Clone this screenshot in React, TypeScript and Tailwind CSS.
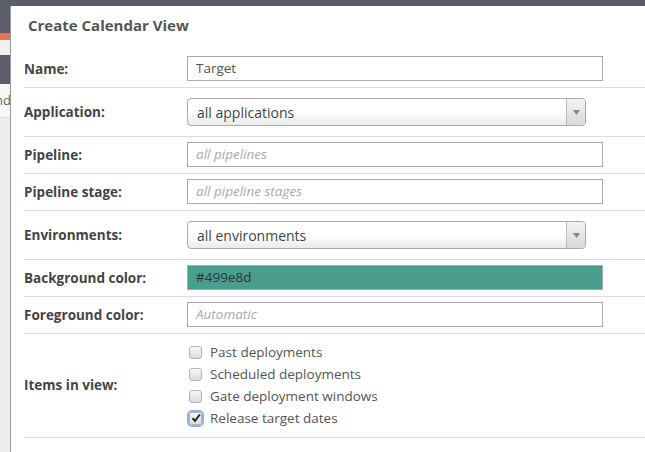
import React from "react";

const inputBase =
  "h-[25px] w-[416px] border border-[#aaa] px-[8px] flex items-center text-[13.5px] font-['Open_Sans',sans-serif]";

function Row({ label, children, py = "pt-[5px] pb-[6px]" }: { label: string; children: React.ReactNode; py?: string }) {
  return (
    <div className={`flex items-center border-b border-[#ddd] ml-[13px] ${py}`}>
      <div className="w-[163px] shrink-0 text-[13.5px] leading-[20px] font-bold text-[#444] font-['Open_Sans',sans-serif]">{label}</div>
      {children}
    </div>
  );
}

function Select({ value }: { value: string }) {
  return (
    <div className="flex h-[28px] w-[399px] rounded-[4px] border border-[#aaa] bg-gradient-to-b from-white from-50% to-[#eaeaea] text-[14px] text-[#444] font-['Open_Sans',sans-serif]">
      <div className="flex-1 flex items-center pl-[9px]">{value}</div>
      <div className="w-[19px] border-l border-[#bbb] flex items-center justify-center rounded-r-[3px] bg-gradient-to-b from-[#f4f4f4] to-[#d8d8d8]">
        <svg width="7" height="5" viewBox="0 0 7 5">
          <path d="M0 0 L7 0 L3.5 5 Z" fill="#888" />
        </svg>
      </div>
    </div>
  );
}

function Check({ label, checked = false }: { label: string; checked?: boolean }) {
  return (
    <div className="flex items-center h-[22px]">
      <div
        className={`ml-[2px] w-[13px] h-[13px] rounded-[3px] border border-[#b4b4b4] bg-gradient-to-b from-[#f6f6f6] to-[#dcdcdc] flex items-center justify-center ${
          checked ? "outline outline-2 outline-[#8fb3e6]" : ""
        }`}
      >
        {checked && (
          <svg width="10" height="10" viewBox="0 0 10 10">
            <path d="M1.5 5.2 L4 8 L8.8 1.5" stroke="#222" strokeWidth="2" fill="none" />
          </svg>
        )}
      </div>
      <span className="ml-[8px] text-[13.5px] text-[#555] font-['Open_Sans',sans-serif]">{label}</span>
    </div>
  );
}

export default function App() {
  return (
    <div className="relative w-[645px] h-[452px] overflow-hidden bg-[#eeeeee]">
      {/* background page */}
      <div className="flex flex-col">
        <div className="h-[33px] bg-[#5b5d6a]" />
        <div className="h-[7px] bg-[#e5774e]" />
        <div className="h-[15px] bg-[#f0f0f0]" />
        <div className="h-[29px] bg-[#5b5d6a]" />
        <div className="h-[34px] border-b border-[#ddd] bg-[#f7f7f7] flex items-center text-[13px] text-[#666] font-['Open_Sans',sans-serif] -ml-[5px]">
          nd
        </div>
      </div>

      {/* modal */}
      <div className="absolute left-[10px] top-[6px] w-[660px] bottom-0 bg-white border-l border-[#9a9a9a]">
        <div className="h-[45px] pl-[17px] pt-[8px] text-[15px] font-bold text-[#555] font-['Open_Sans',sans-serif]">
          Create Calendar View
        </div>
        <Row label="Name:">
          <div className={`${inputBase} text-[#555]`}>Target</div>
        </Row>
        <Row label="Application:" py="py-[10px]">
          <Select value="all applications" />
        </Row>
        <Row label="Pipeline:">
          <div className={`${inputBase} italic text-[#aaa]`}>all pipelines</div>
        </Row>
        <Row label="Pipeline stage:">
          <div className={`${inputBase} italic text-[#aaa]`}>all pipeline stages</div>
        </Row>
        <Row label="Environments:" py="py-[10px]">
          <Select value="all environments" />
        </Row>
        <Row label="Background color:">
          <div className={`${inputBase} bg-[#499e8d] text-[#333]`}>#499e8d</div>
        </Row>
        <Row label="Foreground color:">
          <div className={`${inputBase} italic text-[#aaa]`}>Automatic</div>
        </Row>
        <Row label="Items in view:" py="pt-[7px] pb-[8px]">
          <div className="flex flex-col">
            <Check label="Past deployments" />
            <Check label="Scheduled deployments" />
            <Check label="Gate deployment windows" />
            <Check label="Release target dates" checked />
          </div>
        </Row>
      </div>
    </div>
  );
}
